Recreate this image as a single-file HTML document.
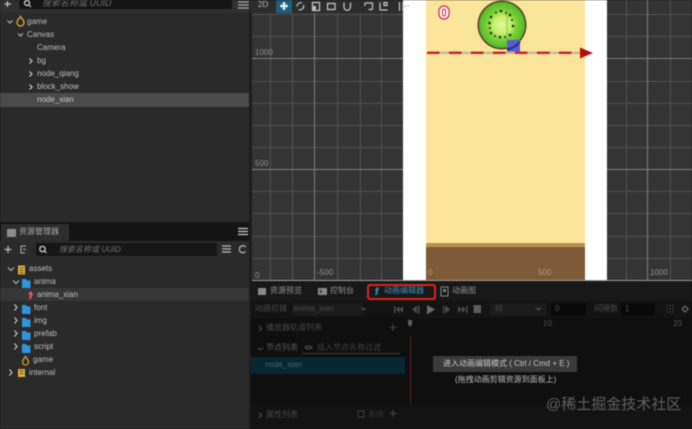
<!DOCTYPE html>
<html><head><meta charset="utf-8">
<style>
html,body{margin:0;padding:0;background:#141414}
#r{position:relative;width:692px;height:429px;overflow:hidden;background:#141414;font-family:"Liberation Sans","Noto Sans CJK SC",sans-serif;filter:blur(.5px)}
.a{position:absolute}
.t{position:absolute;font-size:8px;line-height:12px;color:#a8a8a8;white-space:nowrap}
svg{position:absolute;left:0;top:0}
</style></head><body>
<div id="r">
<div class="a" style="left:0;top:0;width:250px;height:222px;background:#2a2a2a"></div>
<div class="a" style="left:0;top:0;width:250px;height:13px;background:#303030"></div>
<div class="a" style="left:19px;top:0;width:213px;height:9px;background:#151515"></div>
<div class="a" style="left:0;top:93px;width:250px;height:14px;background:#4b4b4b"></div>
<div class="a" style="left:0;top:224px;width:250px;height:205px;background:#2a2a2a"></div>
<div class="a" style="left:0;top:224px;width:250px;height:17px;background:#141414"></div>
<div class="a" style="left:1px;top:224px;width:68px;height:17px;background:#2d2d2d"></div>
<div class="a" style="left:36px;top:243px;width:181px;height:13px;background:#161616"></div>
<div class="a" style="left:0;top:288px;width:250px;height:13px;background:#363636"></div>
<div class="a" style="left:250px;top:0;width:442px;height:281px;background:#343434"></div>
<div class="a" style="left:250px;top:0;width:2px;height:281px;background:#202020"></div>
<div class="a" style="left:249px;top:0;width:2px;height:429px;background:#1c1c1c"></div>

<svg width="692" height="429" viewBox="0 0 692 429" fill="none">
<g stroke="#505050" stroke-width="1">
<path d="M270.500 0V281M292.500 0V281M337.500 0V281M360.500 0V281M381.500 0V281M626.500 0V281M670.500 0V281"/>
<path d="M252 14.500H692M252 36.500H692M252 81.500H692M252 103.500H692M252 125.500H692M252 147.500H692M252 191.500H692M252 213.500H692M252 236.500H692M252 258.500H692"/>
</g>
<g stroke="#808080" stroke-width="1">
<path d="M314.500 0V281M647.500 0V281M252 58.500H692M252 169.500H692"/>
</g>
<path d="M252 280.500H692" stroke="#999"/>
</svg>

<div class="a" style="left:250px;top:0;width:162px;height:13px;background:#2c2c2c"></div>
<div class="a" style="left:276px;top:0;width:16px;height:13px;background:#1d5f80"></div>
<div class="a" style="left:403px;top:0;width:204px;height:280px;background:#fff"></div>
<div class="a" style="left:426px;top:0;width:159px;height:243px;background:#fbe59a"></div>
<div class="a" style="left:426px;top:243px;width:159px;height:4px;background:#b8914f"></div>
<div class="a" style="left:426px;top:247px;width:159px;height:33px;background:#7f5a38"></div>

<svg width="692" height="429" viewBox="0 0 692 429" fill="none">
<defs>
<radialGradient id="k"><stop offset="0" stop-color="#e2f89a"/><stop offset=".4" stop-color="#c4ee6a"/><stop offset=".62" stop-color="#7fd23a"/><stop offset="1" stop-color="#4fb928"/></radialGradient>
</defs>
<g stroke="#c8c8c8" stroke-width="1.200">
<path d="M284 2.500V9.500M280.500 6H287.500" stroke="#fff" stroke-width="1.700"/>
<path d="M279.800 6l2-2v4zM288.200 6l-2-2v4zM284 1.800l-2 2h4zM284 10.200l-2-2h4z" fill="#fff" stroke="none"/>
<path d="M297 6.500a3.700 3.700 0 0 1 5-3.500M303.500 5a3.700 3.700 0 0 1-5 4.500"/>
<path d="M312.500 2.500h7v8h-7z"/><path d="M312.500 6h3.500v4.500h-3.500z" fill="#c0c0c0" stroke="none"/>
<path d="M327.500 3.500h7.500v6h-7.500z"/>
<path d="M344 2.500v4.500a3.200 3.200 0 0 0 6.500 0V2.500"/>
<path d="M365 3h7.500v6.500M365 3v3M368.500 9.500h4"/>
<path d="M380 2.500v7.500h7.500M384 2.500h3v3h-3z"/>
<path d="M399.500 2v9M403 2v9M403 6h3"/>
<path d="M407 5l1.200 1.500 1.200-1.500" stroke-width=".8"/>
</g>
<!-- kiwi -->
<circle cx="502" cy="25" r="24.500" fill="#5c3f1f"/>
<circle cx="502" cy="25" r="23" fill="url(#k)"/>
<g fill="#2c2c18">
<circle cx="491" cy="17" r="1.300"/><circle cx="501" cy="11" r="1.300"/><circle cx="510" cy="15" r="1.300"/><circle cx="513" cy="26" r="1.300"/><circle cx="510" cy="35" r="1.300"/><circle cx="500" cy="37" r="1.300"/><circle cx="491" cy="33" r="1.300"/><circle cx="489.500" cy="23" r="1.300"/><circle cx="496" cy="12.500" r="1"/><circle cx="506" cy="13" r="1"/><circle cx="512" cy="20" r="1"/><circle cx="505" cy="37" r="1"/><circle cx="495" cy="36" r="1"/><circle cx="490" cy="28" r="1"/>
</g>
<path d="M507 40h13v12h-13z" fill="#5a5ad2"/>
<path d="M507 49.500a24.500 24.500 0 0 0 13-7.500" stroke="#2a2a80" stroke-width="2"/>
<path d="M507 40V0" stroke="#5ab030" stroke-width="1" opacity=".6"/>
<!-- axis -->
<path d="M427 52.800H580" stroke="#c5bb8f" stroke-width="2.400"/>
<path d="M427 52.800H580" stroke="#c5202a" stroke-width="2.400" stroke-dasharray="12.500 9.500"/>
<path d="M580 47.500L593 53L580 58.500Z" fill="#b80d0d"/>
<rect x="439" y="6" width="10" height="13" rx="5" fill="#fff" stroke="#d1465f" stroke-width="1.500"/>
<rect x="442.500" y="9" width="3" height="7" rx="1.500" stroke="#d1465f" stroke-width="1.200"/>

<!-- top left icons -->
<path d="M7.500 1V7M4.500 4H11" stroke="#c8c8c8" stroke-width="1.200"/>
<circle cx="27" cy="3" r="2.500" stroke="#ddd" stroke-width="1.200"/><path d="M29 5l2 2" stroke="#ddd"/>
<path d="M238 2h11M238 5h11M238 8h11" stroke="#aaa" stroke-width="1.200"/>
<!-- hierarchy -->
<path d="M7.500 20.500L10 23L12.500 20.500M18 33.500L20.500 36L23 33.500" stroke="#bbb" stroke-width="1.100"/>
<path d="M29.500 58.500L32 61L29.500 63.500M29.500 71.500L32 74L29.500 76.500M29.500 84.500L32 87L29.500 89.500" stroke="#ccc" stroke-width="1.200"/>
<path d="M20.500 16.500c-2 3-3.500 4-3.500 6a3.500 3.500 0 0 0 7 0c0-2-1.500-3-3.500-6z" stroke="#e0a030" stroke-width="1.400"/>
<!-- assets panel icons -->
<rect x="7" y="229" width="9" height="8" fill="#8d8d8d"/>
<path d="M238 228.500h10M238 231.500h10M238 234.500h10" stroke="#ccc" stroke-width="1.200"/>
<path d="M8 246V253M4.500 249.500H11.500" stroke="#bbb" stroke-width="1.200"/>
<path d="M21 246h5M21 246v7h4M23 249.500h3M23 253h1" stroke="#aaa" stroke-width="1.100"/>
<circle cx="42.500" cy="249" r="2.700" stroke="#ddd" stroke-width="1.200"/><path d="M44.500 251l2 2" stroke="#ddd"/>
<path d="M222 246h9M222 249h9M222 252h9" stroke="#bbb" stroke-width="1.200"/>
<path d="M245.500 247a3.500 3.500 0 1 0 0 4.500" stroke="#bbb" stroke-width="1.200"/>
<!-- assets tree -->
<path d="M8 267.500L11 270.500L14 267.500M13 280.500L16 283.500L19 280.500" stroke="#bbb" stroke-width="1.100"/>
<path d="M14.500 304.500L17 307.500L14.500 310.500M14.500 317.500L17 320.500L14.500 323.500M14.500 330.500L17 333.500L14.500 336.500M14.500 343.500L17 346.500L14.500 349.500M9.500 369.500L12 372.500L9.500 375.500" stroke="#ccc" stroke-width="1.100"/>
<rect x="18" y="265.500" width="7" height="9" fill="#e0b040"/><path d="M19.500 268h4M19.500 270.500h4M19.500 273h4" stroke="#6a5018"/>
<rect x="18" y="369" width="7" height="8" fill="#e0b040"/><path d="M19.500 371h4M19.500 373.500h4" stroke="#6a5018"/>
<g fill="#2f96dd">
<path d="M22 279h4l1 1.500h3.500V288H22z"/><path d="M22 305h4l1 1.500h3.500V314H22z"/><path d="M22 318h4l1 1.500h3.500V327H22z"/><path d="M22 331h4l1 1.500h3.500V340H22z"/><path d="M22 344h4l1 1.500h3.500V353H22z"/>
</g>
<path d="M25.500 356.500c-2 3-3 4-3 5.500a3 3 0 0 0 6 0c0-1.500-1-2.500-3-5.500z" stroke="#d9a63a" stroke-width="1.200"/>
<path d="M31 291l-3 3 2 1-1 4 2 0 1-3 1-2-1-1z" fill="#d25f63"/>
</svg>

<div class="t" style="left:42px;top:-3px;font-size:9px;font-style:italic;color:#6e6e6e">搜索名称或 UUID</div>
<div class="t" style="left:27px;top:16px;color:#bdbdbd">game</div>
<div class="t" style="left:27px;top:29px;color:#bdbdbd">Canvas</div>
<div class="t" style="left:37px;top:42px;color:#bdbdbd">Camera</div>
<div class="t" style="left:37px;top:55px;color:#bdbdbd">bg</div>
<div class="t" style="left:37px;top:68px;color:#bdbdbd">node_qiang</div>
<div class="t" style="left:37px;top:81px;color:#bdbdbd">block_show</div>
<div class="t" style="left:37px;top:94px;color:#c6c6c6">node_xian</div>

<div class="t" style="left:19px;top:226px;color:#a5a5a5">资源管理器</div>
<div class="t" style="left:59px;top:244px;font-style:italic;color:#707070">搜索名称或 UUID</div>
<div class="t" style="left:29px;top:263px;color:#bdbdbd">assets</div>
<div class="t" style="left:34px;top:276px;color:#bdbdbd">anima</div>
<div class="t" style="left:37px;top:289px;color:#bdbdbd">anima_xian</div>
<div class="t" style="left:34px;top:302px;color:#bdbdbd">font</div>
<div class="t" style="left:34px;top:315px;color:#bdbdbd">img</div>
<div class="t" style="left:34px;top:328px;color:#bdbdbd">prefab</div>
<div class="t" style="left:34px;top:341px;color:#bdbdbd">script</div>
<div class="t" style="left:33px;top:354px;color:#bdbdbd">game</div>
<div class="t" style="left:29px;top:367px;color:#bdbdbd">internal</div>

<div class="t" style="left:258px;top:-1px;color:#b5b5b5">2D</div>
<div class="t" style="left:255px;top:47px;color:#8e8e8e">1000</div>
<div class="t" style="left:255px;top:158px;color:#8e8e8e">500</div>
<div class="t" style="left:255px;top:270px;color:#8e8e8e">0</div>
<div class="t" style="left:317px;top:267px;color:#8e8e8e">-500</div>
<div class="t" style="left:428px;top:267px;color:#b09a7c">0</div>
<div class="t" style="left:538px;top:267px;color:#a89a80">500</div>
<div class="t" style="left:650px;top:267px;color:#8e8e8e">1000</div>

<div class="a" style="left:251px;top:281px;width:441px;height:148px;background:#0f0f0f"></div>
<div class="a" style="left:251px;top:281px;width:441px;height:20px;background:#181818"></div>
<div class="a" style="left:251px;top:301px;width:441px;height:17px;background:#131313"></div>
<div class="a" style="left:251px;top:357px;width:154px;height:17px;background:#0a2632"></div>
<div class="a" style="left:251px;top:405px;width:441px;height:24px;background:#131313"></div>
<div class="a" style="left:293px;top:303px;width:70px;height:13px;background:#1b1b1b"></div>
<div class="a" style="left:490px;top:303px;width:56px;height:13px;background:#1b1b1b"></div>
<div class="a" style="left:551px;top:303px;width:35px;height:13px;background:#0a0a0a"></div>
<div class="a" style="left:621px;top:303px;width:34px;height:13px;background:#0a0a0a"></div>
<div class="a" style="left:302px;top:353px;width:98px;height:1px;background:#3a3a3a"></div>
<div class="a" style="left:433px;top:356px;width:144px;height:16px;background:#3a3a3a"></div>
<div class="a" style="left:410px;top:336px;width:1px;height:68px;background:#5c1c26"></div>

<svg width="692" height="429" viewBox="0 0 692 429" fill="none">
<rect x="368" y="285" width="67" height="14" rx="2" stroke="#e3201b" stroke-width="2"/>
<rect x="258" y="288" width="8" height="7" fill="#8a8a8a"/>
<rect x="318" y="288" width="9" height="7" fill="#8a8a8a"/><path d="M320 290l1.500 1.500-1.500 1.500" stroke="#222"/>
<path d="M377 287l-2 3 1 1-1 4h2l1-4 1-3z" fill="#2a88b8"/>
<rect x="441" y="287" width="7" height="9" stroke="#8a8a8a"/><circle cx="444.500" cy="290.500" r="1.500" fill="#8a8a8a"/>
<g fill="#4d4d4d">
<path d="M394 306h1.500v7H394zM403 306v7l-3.500-3.500zM399.500 306v7l-3.500-3.500z"/>
<path d="M417 305.500v8l-5-4zM418 305.500h1.500v8H418z"/>
<path d="M427 305l8 4.500-8 5z" fill="#6b6b6b"/>
<path d="M445 305.500v8l5-4zM443 305.500h1v8h-1z"/>
<path d="M458 306v7l3.500-3.500zM462 306v7l3.500-3.500zM466 306h1.500v7H466z"/>
</g>
<rect x="473.500" y="305" width="7.500" height="8" fill="#5b5b5b"/>
<path d="M361 307.500l2.500 2.500 2.500-2.500M536 307.500l2.500 2.500 2.500-2.500" stroke="#555"/>
<g fill="#4c4c4c"><circle cx="667" cy="306" r=".7"/><circle cx="670" cy="306" r=".7"/><circle cx="673" cy="306" r=".7"/><circle cx="667" cy="309" r=".7"/><circle cx="670" cy="309" r=".7"/><circle cx="673" cy="309" r=".7"/><circle cx="667" cy="312" r=".7"/><circle cx="670" cy="312" r=".7"/><circle cx="673" cy="312" r=".7"/></g>
<path d="M685 306l3 3-3 3-3-3z" stroke="#777"/>
<path d="M259 326l2.500 2.500-2.500 2.500M259 413l2.500 2.500-2.500 2.500M258 347.500l2.500 2.500 2.500-2.500" stroke="#4c4c4c"/>
<path d="M393 324v7M389.500 327.500h7M393 410v7M389.500 413.500h7" stroke="#444"/>
<path d="M408 320h4v4l-2 3-2-3z" fill="#5f5f5f"/>
<path d="M305 347.500c2-2 5-2 7 0-2 2-5 2-7 0z" stroke="#555"/>
<rect x="358" y="411" width="6" height="6" stroke="#3a3a3a"/>
</svg>

<div class="t" style="left:270px;top:285px;color:#8f8f8f">资源预览</div>
<div class="t" style="left:330px;top:285px;color:#8f8f8f">控制台</div>
<div class="t" style="left:384px;top:285px;color:#3592bd">动画编辑器</div>
<div class="t" style="left:452px;top:285px;color:#8f8f8f">动画图</div>
<div class="t" style="left:255px;top:303px;color:#454545">动画剪辑</div>
<div class="t" style="left:293px;top:303px;color:#464646">anima_xian</div>
<div class="t" style="left:495px;top:303px;color:#464646">帧</div>
<div class="t" style="left:555px;top:303px;color:#505050">0</div>
<div class="t" style="left:594px;top:303px;color:#4a4a4a">间隔数</div>
<div class="t" style="left:625px;top:303px;color:#505050">1</div>
<div class="t" style="left:543px;top:318px;color:#505050">10</div>
<div class="t" style="left:673px;top:318px;color:#505050">20</div>
<div class="t" style="left:266px;top:322px;color:#464646">播放器轨道列表</div>
<div class="t" style="left:266px;top:342px;color:#5a5a5a">节点列表</div>
<div class="t" style="left:317px;top:342px;color:#3e3e3e">插入节点名称过滤</div>
<div class="t" style="left:265px;top:359px;color:#3f6472">node_xian</div>
<div class="t" style="left:443px;top:358px;color:#c8c8c8">进入动画编辑模式 ( Ctrl / Cmd + E )</div>
<div class="t" style="left:455px;top:374px;color:#bdbdbd">(拖拽动画剪辑资源到面板上)</div>
<div class="t" style="left:266px;top:409px;color:#464646">属性列表</div>
<div class="t" style="left:368px;top:409px;color:#333">系统</div>
<div class="t" style="left:546px;top:396px;font-size:15px;line-height:18px;color:#606060">@稀土掘金技术社区</div>
</div>
</body></html>
